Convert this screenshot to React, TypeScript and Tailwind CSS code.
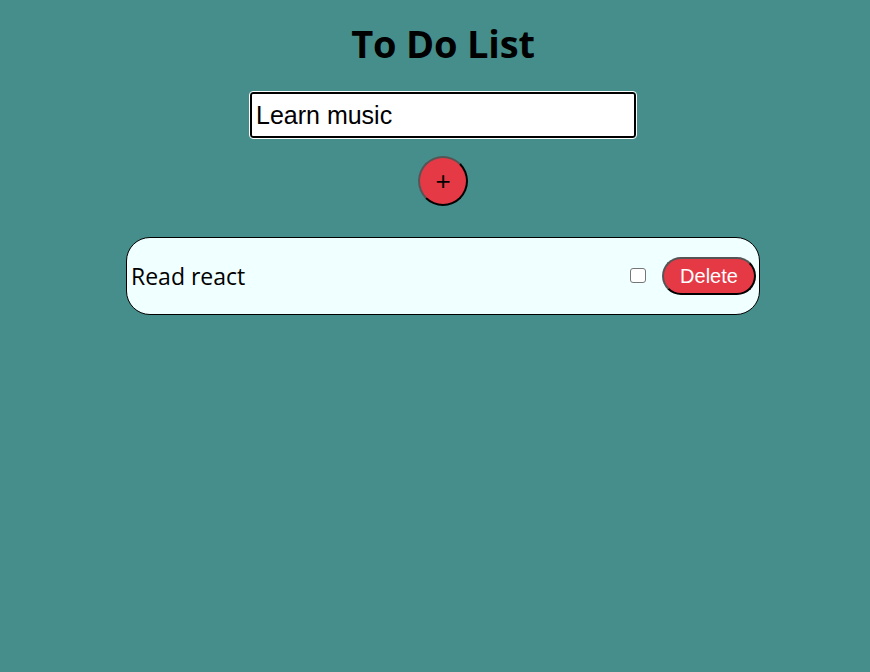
import React, { useState } from "react";

const trebuchet = "font-['Trebuchet_MS','Open_Sans','DejaVu_Sans',sans-serif]";

export default function App() {
  const [text, setText] = useState("Learn music");
  const [todos] = useState([{ id: 1, title: "Read react", done: false }]);

  return (
    <div className={`min-h-[672px] w-full bg-[#468e8b] flex flex-col items-center pl-4 ${trebuchet}`}>
      <h1 className="mt-[21px] text-[38px] leading-[44px] font-bold text-black tracking-[-0.2px]">
        To Do List
      </h1>

      {/* input + add */}
      <input
        value={text}
        onChange={(e) => setText(e.target.value)}
        className="mt-[27px] h-[46px] w-[386px] bg-white border-2 border-black rounded-[3px] outline outline-1 outline-white px-[4px] text-[25px] text-black font-['Liberation_Sans',Arial,sans-serif]"
      />
      <button className="mt-[18px] w-[50px] h-[50px] rounded-full bg-[#e63946] border-2 border-t-[#555] border-l-[#555] border-r-black border-b-black flex items-center justify-center text-[26px] leading-none text-black font-['Liberation_Sans',Arial,sans-serif]">
        +
      </button>

      {/* list */}
      <div className="mt-[31px] w-[634px] flex flex-col gap-3">
        {todos.map((todo) => (
          <div
            key={todo.id}
            className="h-[78px] bg-[#f0ffff] border border-black rounded-[24px] flex items-center pl-[4px] pr-[3px]"
          >
            <span className="text-[23px] text-black">{todo.title}</span>
            <input
              type="checkbox"
              defaultChecked={todo.done}
              className="ml-auto w-[16px] h-[15px] mr-[16px] mt-[-2px] appearance-none bg-white border border-[#767676] rounded-[3px]"
            />
            <button className="h-[38px] w-[94px] rounded-full bg-[#e63946] border-2 border-t-[#555] border-l-[#555] border-r-black border-b-black text-white text-[20px] font-['Liberation_Sans',Arial,sans-serif]">
              Delete
            </button>
          </div>
        ))}
      </div>
    </div>
  );
}
